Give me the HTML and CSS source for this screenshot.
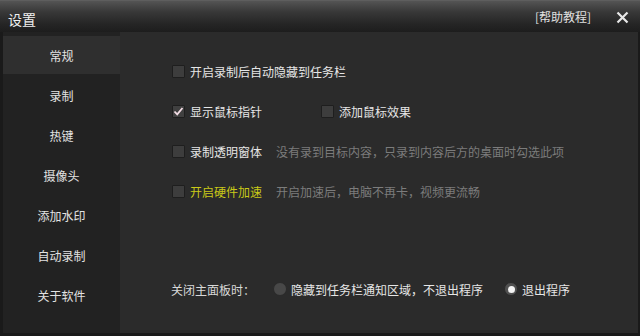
FILE: index.html
```html
<!DOCTYPE html>
<html lang="zh-CN">
<head>
<meta charset="utf-8">
<title>设置</title>
<link rel="stylesheet" href="styles.css">
</head>
<body>
<div class="window">
  <div class="titlebar">
    <div class="title">设置</div>
    <div class="help">[帮助教程]</div>
    <div class="close">
      <svg width="13" height="13" viewBox="0 0 13 13"><path d="M1.5 1.5 L11.5 11.5 M11.5 1.5 L1.5 11.5" stroke="#e8e8e8" stroke-width="2.2" fill="none"/></svg>
    </div>
  </div>
  <div class="content">
    <div class="sidebar">
      <div class="nav active">常规</div>
      <div class="nav">录制</div>
      <div class="nav">热键</div>
      <div class="nav">摄像头</div>
      <div class="nav">添加水印</div>
      <div class="nav">自动录制</div>
      <div class="nav">关于软件</div>
    </div>
    <div class="main">
      <div class="row">
        <div class="opt"><span class="box"></span><span class="label">开启录制后自动隐藏到任务栏</span></div>
      </div>
      <div class="row">
        <div class="opt first"><span class="box checked"><svg width="13" height="13" viewBox="0 0 13 13"><path d="M2.5 6.5 L5.2 9.4 L10.5 3" stroke="#f2dce4" stroke-width="1.8" fill="none"/></svg></span><span class="label">显示鼠标指针</span></div>
        <div class="opt"><span class="box"></span><span class="label">添加鼠标效果</span></div>
      </div>
      <div class="row">
        <div class="opt"><span class="box"></span><span class="label">录制透明窗体</span></div>
        <span class="hint">没有录到目标内容，只录到内容后方的桌面时勾选此项</span>
      </div>
      <div class="row">
        <div class="opt"><span class="box"></span><span class="label yellow">开启硬件加速</span></div>
        <span class="hint">开启加速后，电脑不再卡，视频更流畅</span>
      </div>
      <div class="row bottom">
        <span class="close-label">关闭主面板时：</span>
        <div class="radio-opt first-radio"><span class="radio"></span><span class="label">隐藏到任务栏通知区域，不退出程序</span></div>
        <div class="radio-opt"><span class="radio on"></span><span class="label">退出程序</span></div>
      </div>
    </div>
  </div>
</div>
</body>
</html>
```

FILE: styles.css
```css
* { box-sizing: border-box; }
html, body { margin: 0; padding: 0; }
body {
  width: 640px;
  height: 336px;
  background: #161616;
  font-family: "Noto Sans CJK SC", "Microsoft YaHei", sans-serif;
  font-size: 12px;
  color: #e4e4e4;
  overflow: hidden;
}
.window {
  width: 640px;
  height: 336px;
  display: flex;
  flex-direction: column;
  background: #1a1a1a;
}
.titlebar {
  height: 32px;
  flex: none;
  display: flex;
  align-items: flex-start;
  background: linear-gradient(#545454 0%, #383838 35%, #252525 75%, #1d1d1d 100%);
  border-top: 1px solid #5e5e5e;
}
.title {
  font-size: 14px;
  line-height: 14px;
  padding: 11px 0 0 8px;
  color: #f0f0f0;
}
.help {
  margin-left: auto;
  font-size: 12px;
  line-height: 12px;
  padding-top: 10px;
  color: #e0e0e0;
}
.close {
  width: 13px;
  height: 13px;
  margin: 10px 11px 0 25px;
  display: flex;
}
.content {
  flex: 1;
  display: flex;
  margin: 0 2px 3px 3px;
  background: #1f1f1f;
}
.sidebar {
  width: 117px;
  flex: none;
  background: #222222;
  padding-top: 4px;
  display: flex;
  flex-direction: column;
  gap: 2px;
}
.nav {
  height: 38px;
  display: flex;
  align-items: center;
  justify-content: center;
  color: #e2e2e2;
  font-size: 12px;
}
.nav.active {
  background: #2f2f2f;
}
.main {
  flex: 1;
  background: #2b2b2b;
  padding: 19px 0 24px 52px;
  display: flex;
  flex-direction: column;
}
.row {
  height: 40px;
  display: flex;
  align-items: center;
}
.row.bottom {
  margin-top: auto;
}
.opt {
  display: flex;
  align-items: center;
}
.opt.first { width: 149px; }
.box {
  width: 13px;
  height: 13px;
  background: #3d3d3d;
  border: 1px solid #1e1e1e;
  border-radius: 1px;
  margin-right: 5px;
  display: flex;
  align-items: center;
  justify-content: center;
  flex: none;
}
.box.checked {
  background: #404040;
}
.box svg { margin: -1px; }
.label {
  color: #e6e6e6;
  white-space: nowrap;
}
.label.yellow { color: #c9c918; }
.hint {
  margin-left: 14px;
  color: #7c7c7c;
  white-space: nowrap;
}
.close-label {
  color: #d8d8d8;
  margin-left: -1px;
  white-space: nowrap;
}
.radio-opt {
  display: flex;
  align-items: center;
}
.first-radio { margin-left: 18px; margin-right: 21px; }
.radio {
  width: 14px;
  height: 14px;
  border-radius: 50%;
  background: #484848;
  border: 1px solid #2a2a2a;
  margin-right: 4px;
  display: flex;
  align-items: center;
  justify-content: center;
  flex: none;
}
.radio.on {
  background: #505050;
}
.radio.on::after {
  content: "";
  width: 7px;
  height: 7px;
  border-radius: 50%;
  background: #f4f4f4;
}
```
